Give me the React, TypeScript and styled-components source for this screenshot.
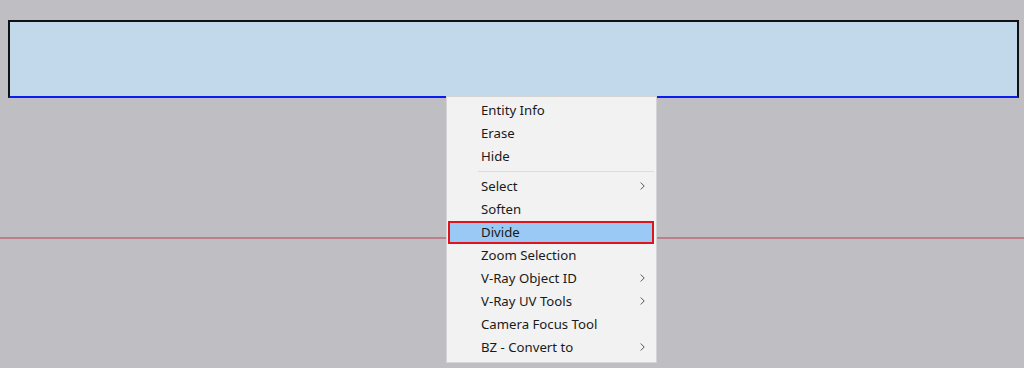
import styled, { createGlobalStyle } from 'styled-components'
import { Fragment } from 'react'

const Global = createGlobalStyle`
  html, body {
    margin: 0;
    padding: 0;
    background: #bfbfc3;
  }
  #root {
    width: 1024px;
    height: 368px;
  }
`

const Viewport = styled.div`
  position: relative;
  width: 1024px;
  height: 368px;
  overflow: hidden;
  background: #bfbfc3;
  padding: 20px 5px 0 8px;
  box-sizing: border-box;
  font-family: "Noto Sans", "Open Sans", sans-serif;
`

const Face = styled.div`
  height: 78px;
  box-sizing: border-box;
  background: #c2d9ec;
  border: 2px solid #111;
  border-bottom: 2px solid #0a1cf0;
`

const Axis = styled.div`
  position: absolute;
  left: 0;
  right: 0;
  top: 237px;
  height: 2px;
  background: #bf7f8a;
`

const Menu = styled.ul`
  position: absolute;
  left: 446px;
  top: 96px;
  width: 211px;
  margin: 0;
  padding: 2px 2px 3px 1px;
  box-sizing: border-box;
  list-style: none;
  display: flex;
  flex-direction: column;
  background: #f2f2f2;
  border: 1px solid #d4d4d4;
`

const Item = styled.li<{ $active?: boolean }>`
  height: 23px;
  display: flex;
  align-items: center;
  padding: 0 9px 1px 33px;
  box-sizing: border-box;
  font-size: 13.2px;
  color: #1a1a1a;
  background: ${p => (p.$active ? '#99c9f4' : 'transparent')};
  outline: ${p => (p.$active ? '2px solid #e0141e' : 'none')};
  outline-offset: -2px;
`

const Label = styled.span`
  flex: 1;
  white-space: nowrap;
`

const Separator = styled.li`
  height: 1px;
  margin: 3px 0 3px 30px;
  background: #dcdcdc;
`

const Chevron = () => (
  <svg width="5" height="8" viewBox="0 0 5 8">
    <polyline points="0.7,0.5 4.2,4 0.7,7.5" fill="none" stroke="#555" strokeWidth="1" />
  </svg>
)

const items: { label: string; sub?: boolean; active?: boolean; sepAfter?: boolean }[] = [
  { label: 'Entity Info' },
  { label: 'Erase' },
  { label: 'Hide', sepAfter: true },
  { label: 'Select', sub: true },
  { label: 'Soften' },
  { label: 'Divide', active: true },
  { label: 'Zoom Selection' },
  { label: 'V-Ray Object ID', sub: true },
  { label: 'V-Ray UV Tools', sub: true },
  { label: 'Camera Focus Tool' },
  { label: 'BZ - Convert to', sub: true },
]

const App = () => {
  return (
    <Viewport>
      <Global />
      <Face />
      <Axis />
      <Menu>
        {items.map(it => (
          <Fragment key={it.label}>
            <Item $active={it.active}>
              <Label>{it.label}</Label>
              {it.sub && <Chevron />}
            </Item>
            {it.sepAfter && <Separator />}
          </Fragment>
        ))}
      </Menu>
    </Viewport>
  )
}

export default App
